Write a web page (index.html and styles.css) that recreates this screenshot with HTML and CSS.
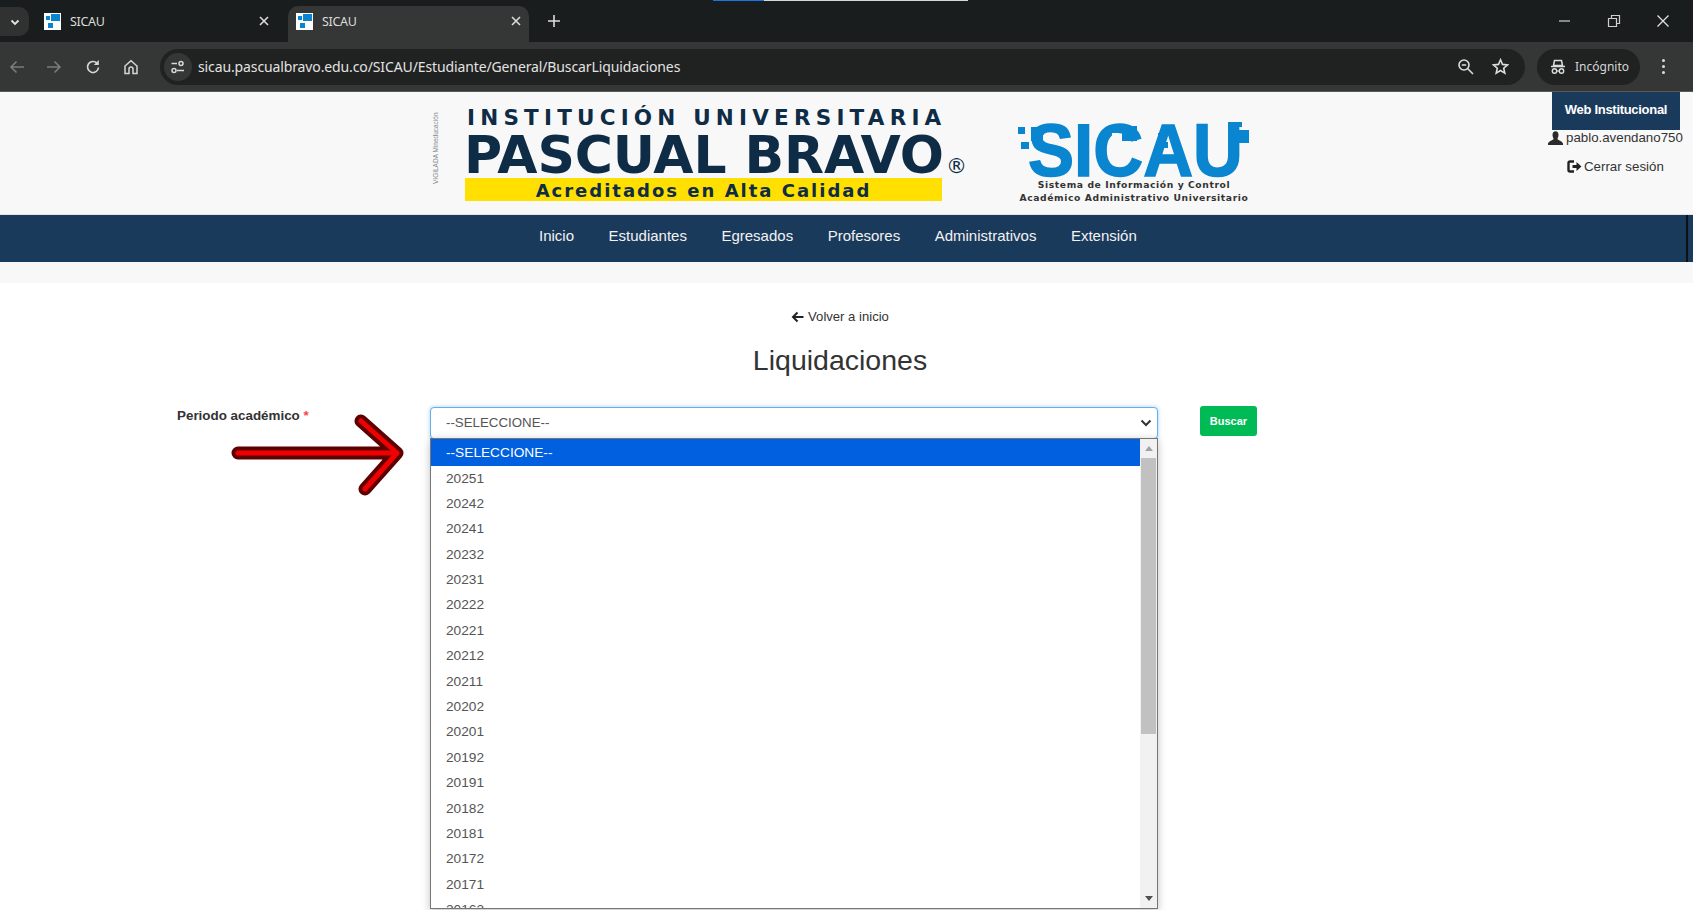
FILE: index.html
```html
<!DOCTYPE html>
<html lang="es">
<head>
    <meta charset="UTF-8">
    <title>SICAU</title>
    <link rel="stylesheet" href="styles.css">
</head>
<body>
    <!-- browser chrome -->
    <div class="tabstrip">
        <div class="load-bar"><span class="load-blue"></span><span class="load-white"></span></div>
        <div class="tab-search">
            <svg width="12" height="12" viewBox="0 0 12 12"><path d="M2.500 4.500 6 8l3.500-3.500" fill="none" stroke="#e3e3e3" stroke-width="1.800"/></svg>
        </div>
        <div class="tab tab-first">
            <svg class="favicon" width="17" height="17" viewBox="0 0 17 17"><rect width="17" height="17" fill="#fff"/><rect x="7" y="1" width="9" height="7" fill="#0b84cf"/><rect x="2" y="3" width="4" height="4" fill="#0b84cf"/><rect x="4" y="10" width="5" height="5" fill="#0b84cf"/></svg>
            <span class="tab-title">SICAU</span>
            <svg class="tab-close" width="12" height="12" viewBox="0 0 12 12"><path d="M2 2l8 8M10 2l-8 8" stroke="#dcdcdc" stroke-width="1.600"/></svg>
        </div>
        <div class="tab tab-active">
            <svg class="favicon" width="17" height="17" viewBox="0 0 17 17"><rect width="17" height="17" fill="#fff"/><rect x="7" y="1" width="9" height="7" fill="#0b84cf"/><rect x="2" y="3" width="4" height="4" fill="#0b84cf"/><rect x="4" y="10" width="5" height="5" fill="#0b84cf"/></svg>
            <span class="tab-title">SICAU</span>
            <svg class="tab-close" width="12" height="12" viewBox="0 0 12 12"><path d="M2 2l8 8M10 2l-8 8" stroke="#dcdcdc" stroke-width="1.600"/></svg>
        </div>
        <svg class="new-tab" width="14" height="14" viewBox="0 0 14 14"><path d="M7 1v12M1 7h12" stroke="#dcdcdc" stroke-width="1.600"/></svg>
        <div class="win-controls">
            <svg width="14" height="14" viewBox="0 0 14 14"><path d="M1 7h11" stroke="#cfcfcf" stroke-width="1.200"/></svg>
            <svg width="14" height="14" viewBox="0 0 14 14"><path d="M1.500 4.500h8v8h-8zM4.500 4.500v-3h8v8h-3" fill="none" stroke="#cfcfcf" stroke-width="1.200"/></svg>
            <svg width="14" height="14" viewBox="0 0 14 14"><path d="M1.500 1.500l11 11M12.500 1.500l-11 11" stroke="#e0e0e0" stroke-width="1.300"/></svg>
        </div>
    </div>
    <div class="toolbar">
        <svg class="nav-btn nav-back" width="16" height="16" viewBox="0 0 16 16"><path d="M15 8H2M7.500 2.500 2 8l5.500 5.500" fill="none" stroke="#7b7b7b" stroke-width="1.600"/></svg>
        <svg class="nav-btn nav-fwd" width="16" height="16" viewBox="0 0 16 16"><path d="M1 8h13M8.500 2.500 14 8l-5.500 5.500" fill="none" stroke="#7b7b7b" stroke-width="1.600"/></svg>
        <svg class="nav-btn nav-reload" width="16" height="16" viewBox="0 0 16 16"><path d="M13.500 8.500A5.500 5.500 0 1 1 12 4.200" fill="none" stroke="#d6d6d6" stroke-width="1.700"/><path d="M13.800 1v5h-5z" fill="#d6d6d6"/></svg>
        <svg class="nav-btn nav-home" width="16" height="16" viewBox="0 0 16 16"><path d="M2 7 8 1.800 14 7v7.500h-4V10a2 2 0 0 0-4 0v4.500H2z" fill="none" stroke="#d6d6d6" stroke-width="1.500"/></svg>
        <div class="omnibox">
            <div class="site-info">
                <svg width="16" height="16" viewBox="0 0 16 16"><path d="M7 4.500H1.500M7 11.500h7" stroke="#d8d8d8" stroke-width="1.500"/><circle cx="11" cy="4.500" r="2" fill="none" stroke="#d8d8d8" stroke-width="1.500"/><circle cx="4" cy="11.500" r="2" fill="none" stroke="#d8d8d8" stroke-width="1.500"/></svg>
            </div>
            <span class="url">sicau.pascualbravo.edu.co/SICAU/Estudiante/General/BuscarLiquidaciones</span>
            <svg class="omni-zoom" width="17" height="17" viewBox="0 0 17 17"><circle cx="7" cy="7" r="5" fill="none" stroke="#dcdcdc" stroke-width="1.600"/><path d="M4.800 7h4.400M10.800 10.800 16 16" stroke="#dcdcdc" stroke-width="1.600"/></svg>
            <svg class="omni-star" width="17" height="17" viewBox="0 0 17 17"><path d="M8.500 1.800l2 4.600 5 .5-3.800 3.300 1.100 4.900-4.300-2.600-4.300 2.600 1.100-4.900L1.500 6.900l5-.5z" fill="none" stroke="#dcdcdc" stroke-width="1.600"/></svg>
        </div>
        <div class="incognito">
            <svg width="16" height="16" viewBox="0 0 16 16"><path d="M4.500 1.500h7l1 5h-9zM1 7.500h14" fill="none" stroke="#dcdcdc" stroke-width="1.500"/><circle cx="4.500" cy="12" r="2.200" fill="none" stroke="#dcdcdc" stroke-width="1.400"/><circle cx="11.500" cy="12" r="2.200" fill="none" stroke="#dcdcdc" stroke-width="1.400"/><path d="M6.700 12h2.600" stroke="#dcdcdc" stroke-width="1.200"/></svg>
            <span>Incógnito</span>
        </div>
        <div class="menu-dots"><i></i><i></i><i></i></div>
    </div>

    <!-- site header -->
    <header class="site-header">
        <div class="vigilada">VIGILADA Mineducación</div>
        <div class="logo-pascual">
            <div class="logo-inst">INSTITUCIÓN UNIVERSITARIA</div>
            <div class="logo-name">PASCUAL BRAVO<span class="logo-reg">®</span></div>
            <div class="logo-band">Acreditados en Alta Calidad</div>
        </div>
        <div class="logo-sicau">
            <svg class="sicau-mark" width="240" height="60" viewBox="0 0 240 60">
                <text class="sicau-letters" x="14" y="58" textLength="215" lengthAdjust="spacingAndGlyphs">SICAU</text>
                <rect x="4" y="9" width="7" height="7" fill="#0a85cf"/>
                <rect x="17" y="9" width="12" height="14" fill="#0a85cf"/>
                <rect x="7" y="24" width="8" height="7" fill="#0a85cf"/>
                <rect x="21" y="21" width="6" height="6" fill="#0a85cf"/>
                <rect x="98" y="15" width="7" height="7" fill="#f8f8f8"/>
                <rect x="108" y="8" width="15" height="15" fill="#0a85cf"/>
                <rect x="144" y="15" width="6" height="6" fill="#0a85cf"/>
                <rect x="148" y="24" width="6" height="6" fill="#0a85cf"/>
                <rect x="214" y="4" width="14" height="5" fill="#0a85cf"/>
                <rect x="214" y="10" width="6" height="6" fill="#0a85cf"/>
                <rect x="223" y="12" width="12" height="13" fill="#0a85cf"/>
                <rect x="217" y="26" width="6" height="6" fill="#0a85cf"/>
            </svg>
            <div class="sicau-sub">Sistema de Información y Control</div>
            <div class="sicau-sub">Académico Administrativo Universitario</div>
        </div>
        <div class="user-box">
            <a class="web-link">Web Institucional</a>
            <div class="user-name">
                <svg width="15" height="14" viewBox="0 0 15 14"><path d="M4.500 4a3 3.800 0 1 1 6 0c0 2-1 3-1 4 0 1 5 2 5.500 4.500V14H0v-1.500C.5 10 5.500 9 5.500 8c0-1-1-2-1-4z" fill="#2b2b2b"/></svg>
                <span>pablo.avendano750</span>
            </div>
            <div class="logout">
                <svg width="15" height="13" viewBox="0 0 15 13"><path d="M7 1.500H3A1.500 1.500 0 0 0 1.500 3v7A1.500 1.500 0 0 0 3 11.500h4" fill="none" stroke="#222" stroke-width="2.400"/><path d="M5.500 5h4V2l5 4.500-5 4.500V8h-4z" fill="#222"/></svg>
                <span>Cerrar sesión</span>
            </div>
        </div>
    </header>

    <nav class="main-nav">
        <a>Inicio</a>
        <a>Estudiantes</a>
        <a>Egresados</a>
        <a>Profesores</a>
        <a>Administrativos</a>
        <a>Extensión</a>
    </nav>
    <div class="nav-gap"></div>

    <main class="content">
        <a class="back-link">
            <svg width="13" height="12" viewBox="0 0 13 12"><path d="M12.500 6H2.500M6.500 1.500 2 6l4.500 4.500" fill="none" stroke="#222" stroke-width="2"/></svg>
            Volver a inicio
        </a>
        <h1 class="page-title">Liquidaciones</h1>

        <form class="search-form">
            <label class="field-label">Periodo académico <span class="req">*</span></label>
            <div class="select-wrap">
                <div class="select-box">
                    <span>--SELECCIONE--</span>
                    <svg width="12" height="8" viewBox="0 0 12 8"><path d="M1.500 1.500 6 6l4.500-4.500" fill="none" stroke="#333" stroke-width="2"/></svg>
                </div>
                <div class="select-popup">
                    <ul class="option-list">
                        <li class="selected">--SELECCIONE--</li>
                        <li>20251</li>
                        <li>20242</li>
                        <li>20241</li>
                        <li>20232</li>
                        <li>20231</li>
                        <li>20222</li>
                        <li>20221</li>
                        <li>20212</li>
                        <li>20211</li>
                        <li>20202</li>
                        <li>20201</li>
                        <li>20192</li>
                        <li>20191</li>
                        <li>20182</li>
                        <li>20181</li>
                        <li>20172</li>
                        <li>20171</li>
                        <li>20162</li>
                    </ul>
                    <div class="scrollbar">
                        <span class="sb-up"></span>
                        <div class="sb-track"><div class="sb-thumb"></div></div>
                        <span class="sb-down"></span>
                    </div>
                </div>
                <svg class="red-arrow" width="190" height="90" viewBox="0 0 190 90">
                    <path d="M14 43H173M137 11 173 43 141 79" fill="none" stroke="#5c0000" stroke-width="13" stroke-linecap="round" stroke-linejoin="round"/>
                    <path d="M14 43H173M137 11 173 43 141 79" fill="none" stroke="#f00000" stroke-width="5" stroke-linecap="round" stroke-linejoin="round"/>
                </svg>
            </div>
            <button class="btn-buscar" type="button">Buscar</button>
        </form>
    </main>
</body>
</html>
```
FILE: styles.css
```css
* {
    box-sizing: border-box;
}
html, body {
    height: 910px;
    overflow: hidden;
}
body {
    margin: 0;
    font-family: "Liberation Sans", Arial, sans-serif;
    background-color: #fff;
    color: #333;
}

/* browser chrome */
.tabstrip {
    position: relative;
    height: 42px;
    background-color: #1a1d1d;
    display: flex;
    align-items: flex-end;
    color: #dcdcdc;
    font-family: "Noto Sans", sans-serif;
    font-size: 12px;
}
.load-bar {
    position: absolute;
    top: 0;
    left: 713px;
    display: flex;
    height: 1px;
}
.load-blue {
    width: 51px;
    background-color: #1a73e8;
}
.load-white {
    width: 204px;
    background-color: #d8d8d8;
}
.tab-search {
    width: 29px;
    height: 29px;
    margin-bottom: 6px;
    background-color: #303232;
    border-radius: 0 10px 10px 0;
    display: flex;
    align-items: center;
    justify-content: center;
}
.tab {
    height: 36px;
    display: flex;
    align-items: center;
    padding-bottom: 6px;
}
.tab-first {
    width: 226px;
    margin-left: 15px;
    margin-right: 18px;
}
.tab-active {
    width: 241px;
    padding-left: 8px;
    padding-right: 7px;
    border-radius: 10px 10px 0 0;
    background-color: #353636;
}
.favicon {
    margin-right: 9px;
}
.tab-title {
    flex: 1;
    font-size: 12.500px;
    letter-spacing: -0.300px;
}
.new-tab {
    margin: 0 0 14px 18px;
}
.win-controls {
    margin-left: auto;
    margin-bottom: 14px;
    display: flex;
    gap: 35px;
    padding-right: 23px;
}
.toolbar {
    height: 50px;
    background-color: #353636;
    border-bottom: 1px solid #5a5a5a;
    display: flex;
    align-items: center;
}
.nav-btn {
    flex: none;
}
.nav-back {
    margin-left: 9px;
}
.nav-fwd {
    margin-left: 21px;
}
.nav-reload {
    margin-left: 23px;
}
.nav-home {
    margin-left: 22px;
}
.omnibox {
    width: 1365px;
    height: 36px;
    margin-left: 21px;
    background-color: #202121;
    border-radius: 18px;
    display: flex;
    align-items: center;
    padding: 0 16px 0 4px;
}
.site-info {
    width: 28px;
    height: 28px;
    border-radius: 50%;
    background-color: #353636;
    display: flex;
    align-items: center;
    justify-content: center;
}
.url {
    margin-left: 6px;
    flex: 1;
    color: #e3e3e3;
    font-family: "Noto Sans", sans-serif;
    font-size: 14px;
    letter-spacing: -0.120px;
    white-space: nowrap;
}
.omni-star {
    margin-left: 18px;
}
.incognito {
    width: 103px;
    height: 36px;
    margin-left: 12px;
    background-color: #202121;
    border-radius: 18px;
    display: flex;
    align-items: center;
    gap: 9px;
    padding-left: 13px;
    color: #d6d6d6;
    font-family: "Noto Sans", sans-serif;
    font-size: 12px;
}
.menu-dots {
    margin-left: 22px;
    display: flex;
    flex-direction: column;
    gap: 3px;
}
.menu-dots i {
    width: 3px;
    height: 3px;
    border-radius: 50%;
    background-color: #dcdcdc;
}

/* site header */
.site-header {
    height: 123px;
    background-color: #f8f8f8;
    display: flex;
    padding-left: 432px;
    border-bottom: 1px solid #e4e4e4;
}
.vigilada {
    writing-mode: vertical-rl;
    transform: rotate(180deg);
    font-size: 6.500px;
    color: #7f8a90;
    height: 62px;
    width: 8px;
    margin-top: 30px;
    white-space: nowrap;
}
.logo-pascual {
    width: 510px;
    margin: 16px 0 0 24px;
    color: #0f2c47;
    font-family: "DejaVu Sans", sans-serif;
    font-weight: 700;
}
.logo-inst {
    font-size: 21.500px;
    line-height: 20px;
    letter-spacing: 5.200px;
    margin-left: 3px;
    white-space: nowrap;
}
.logo-name {
    font-size: 52px;
    line-height: 44px;
    letter-spacing: -0.100px;
    white-space: nowrap;
    margin-top: 5px;
}
.logo-reg {
    font-size: 21px;
    line-height: 1;
    font-weight: 400;
    letter-spacing: 0;
    margin-left: 2px;
}
.logo-band {
    width: 477px;
    height: 23px;
    margin: 1px 0 0 1px;
    background-color: #ffe000;
    text-align: center;
    font-size: 18px;
    line-height: 25px;
    letter-spacing: 2px;
}
.logo-sicau {
    width: 240px;
    margin: 26px 0 0 40px;
    text-align: center;
}
.sicau-mark {
    display: block;
}
.sicau-letters {
    font-family: "Liberation Sans", Arial, sans-serif;
    font-weight: 700;
    font-size: 75px;
    fill: #0a85cf;
    stroke: #0a85cf;
    stroke-width: 1.500px;
}
.sicau-sub {
    font-family: "DejaVu Sans", sans-serif;
    font-weight: 700;
    font-size: 9.200px;
    line-height: 13px;
    letter-spacing: 0.600px;
    color: #333;
    white-space: nowrap;
}
.user-box {
    margin-left: auto;
    margin-right: 13px;
    width: 128px;
    flex: none;
    font-size: 13.300px;
    color: #333;
}
.web-link {
    display: block;
    height: 38px;
    background-color: #1a3a5c;
    color: #fff;
    font-weight: 700;
    font-size: 13px;
    line-height: 36px;
    text-align: center;
    letter-spacing: -0.300px;
}
.user-name {
    display: flex;
    align-items: center;
    gap: 3px;
    margin-left: -4px;
    height: 15px;
    white-space: nowrap;
}
.logout {
    display: flex;
    align-items: center;
    gap: 2px;
    margin: 13px 0 0 15px;
    height: 16px;
    white-space: nowrap;
}
.user-name svg,
.logout svg {
    flex: none;
}

/* navigation */
.main-nav {
    height: 47px;
    background: linear-gradient(to right, #1a3a5c 1686px, #0c1116 1686px, #0c1116 1688px, #1a3a5c 1688px);
    display: flex;
    padding: 12px 0 0 539px;
    gap: 34.500px;
    font-size: 15px;
    color: #f2f2f2;
}
.nav-gap {
    height: 21px;
    background-color: #f8f8f8;
}

/* page content */
.content {
    display: flex;
    flex-direction: column;
    align-items: center;
    padding-right: 13px;
}
.back-link {
    display: flex;
    align-items: center;
    gap: 4px;
    margin-top: 25px;
    font-size: 13.100px;
    line-height: 18px;
    color: #333;
}
.page-title {
    margin: 15.500px 0 0;
    font-size: 28.500px;
    font-weight: 400;
    line-height: 36px;
    color: #333;
}
.search-form {
    align-self: flex-start;
    display: flex;
    align-items: flex-start;
    margin: 29.500px 0 0 177px;
}
.field-label {
    width: 253px;
    font-size: 13.400px;
    font-weight: 700;
    line-height: 16px;
    padding-top: 1px;
    color: #333;
}
.req {
    color: #f44;
}
.select-wrap {
    position: relative;
    width: 728px;
}
.select-box {
    height: 32px;
    border: 1px solid #66afe9;
    border-radius: 4px;
    box-shadow: 0 0 4px rgba(102, 175, 233, 0.6);
    display: flex;
    align-items: center;
    justify-content: space-between;
    padding: 0 5px 1px 15px;
    font-size: 13.300px;
    color: #555;
    background-color: #fff;
}
.select-popup {
    position: absolute;
    top: 31px;
    left: 0;
    width: 728px;
    height: 471px;
    background-color: #fff;
    border: 1px solid #767676;
    box-shadow: 0 2px 8px rgba(0, 0, 0, 0.25);
    display: flex;
    overflow: hidden;
}
.option-list {
    flex: 1;
    margin: 0;
    padding: 0;
    list-style: none;
    overflow: hidden;
    font-size: 13.700px;
    color: #555;
}
.option-list li {
    height: 25.400px;
    line-height: 25.400px;
    padding-left: 15px;
}
.option-list .selected {
    height: 26.500px;
    line-height: 28px;
    background-color: #0060df;
    color: #fff;
}
.scrollbar {
    width: 17px;
    background-color: #f1f1f1;
    display: flex;
    flex-direction: column;
    align-items: center;
    flex: none;
}
.sb-up {
    margin-top: 7px;
    border-left: 4px solid transparent;
    border-right: 4px solid transparent;
    border-bottom: 5px solid #a3a3a3;
}
.sb-track {
    flex: 1;
    width: 100%;
    padding: 7px 1px 0;
}
.sb-thumb {
    height: 276px;
    background-color: #c1c1c1;
}
.sb-down {
    margin-bottom: 7px;
    border-left: 4px solid transparent;
    border-right: 4px solid transparent;
    border-top: 5px solid #505050;
}
.red-arrow {
    position: absolute;
    top: 3px;
    left: -206px;
}
.btn-buscar {
    margin: -1px 0 0 42px;
    width: 57px;
    height: 30px;
    padding: 0;
    border: none;
    border-radius: 3px;
    background-color: #00bb55;
    color: #fff;
    font-family: "Liberation Sans", Arial, sans-serif;
    font-size: 11px;
    font-weight: 700;
}
```
